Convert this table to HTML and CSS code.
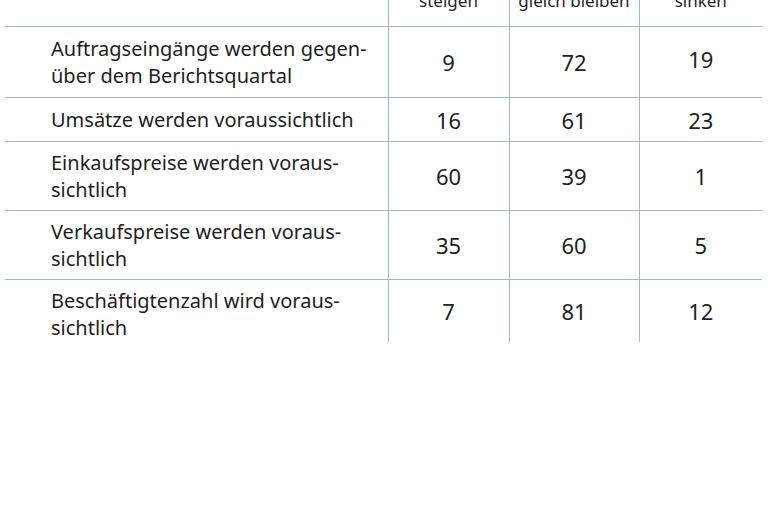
FILE: index.html
```html
<!DOCTYPE html>
<html lang="de">
<head>
<meta charset="utf-8">
<link rel="stylesheet" href="styles.css">
</head>
<body>
<table class="survey">
  <colgroup>
    <col class="c-label"><col class="c-up"><col class="c-same"><col class="c-down">
  </colgroup>
  <thead>
    <tr class="head">
      <th></th><th>steigen</th><th>gleich bleiben</th><th>sinken</th>
    </tr>
  </thead>
  <tbody>
    <tr class="r1">
      <td class="label">Auftragseingänge werden gegen-<br>über dem Berichtsquartal</td>
      <td class="num">9</td><td class="num">72</td><td class="num up">19</td>
    </tr>
    <tr class="r2">
      <td class="label">Umsätze werden voraussichtlich</td>
      <td class="num">16</td><td class="num">61</td><td class="num">23</td>
    </tr>
    <tr class="r3">
      <td class="label">Einkaufspreise werden voraus-<br>sichtlich</td>
      <td class="num">60</td><td class="num">39</td><td class="num">1</td>
    </tr>
    <tr class="r4">
      <td class="label">Verkaufspreise werden voraus-<br>sichtlich</td>
      <td class="num">35</td><td class="num">60</td><td class="num">5</td>
    </tr>
    <tr class="r5 last">
      <td class="label">Beschäftigtenzahl wird voraus-<br>sichtlich</td>
      <td class="num">7</td><td class="num">81</td><td class="num">12</td>
    </tr>
  </tbody>
</table>
</body>
</html>
```
FILE: styles.css
```css
html, body {
  margin: 0;
  padding: 0;
  background: #ffffff;
}

body {
  font-family: "Noto Sans", "Open Sans", sans-serif;
  color: #1e1e22;
}

.survey {
  border-collapse: collapse;
  margin: -22px 0 0 5px;
  width: 757px;
  table-layout: fixed;
}

.c-label { width: 383px; }
.c-up { width: 121px; }
.c-same { width: 130px; }
.c-down { width: 123px; }

.survey th,
.survey td {
  padding: 0;
  border-left: 1.5px solid #9cb9dc;
  border-bottom: 1.5px solid #9cb9dc;
}

.survey th:first-child,
.survey td:first-child {
  border-left: none;
}

.survey tr.last td {
  border-bottom: none;
}

.head th {
  height: 34px;
  font-weight: normal;
  font-size: 17px;
  line-height: 22px;
  vertical-align: bottom;
  padding-bottom: 14px;
  text-align: center;
}

.label {
  font-size: 20px;
  line-height: 27px;
  padding: 8px 0 8px 46px !important;
  vertical-align: top;
}

.r2 .label {
  padding: 8px 0 8px 46px !important;
}

.r3 .label,
.r4 .label {
  padding: 7px 0 7px 46px !important;
}

.r5 .label {
  padding: 7px 0 1px 46px !important;
}

.num {
  font-size: 22px;
  text-align: center;
  vertical-align: middle;
}

.num.up {
  padding-bottom: 6px;
}
```
